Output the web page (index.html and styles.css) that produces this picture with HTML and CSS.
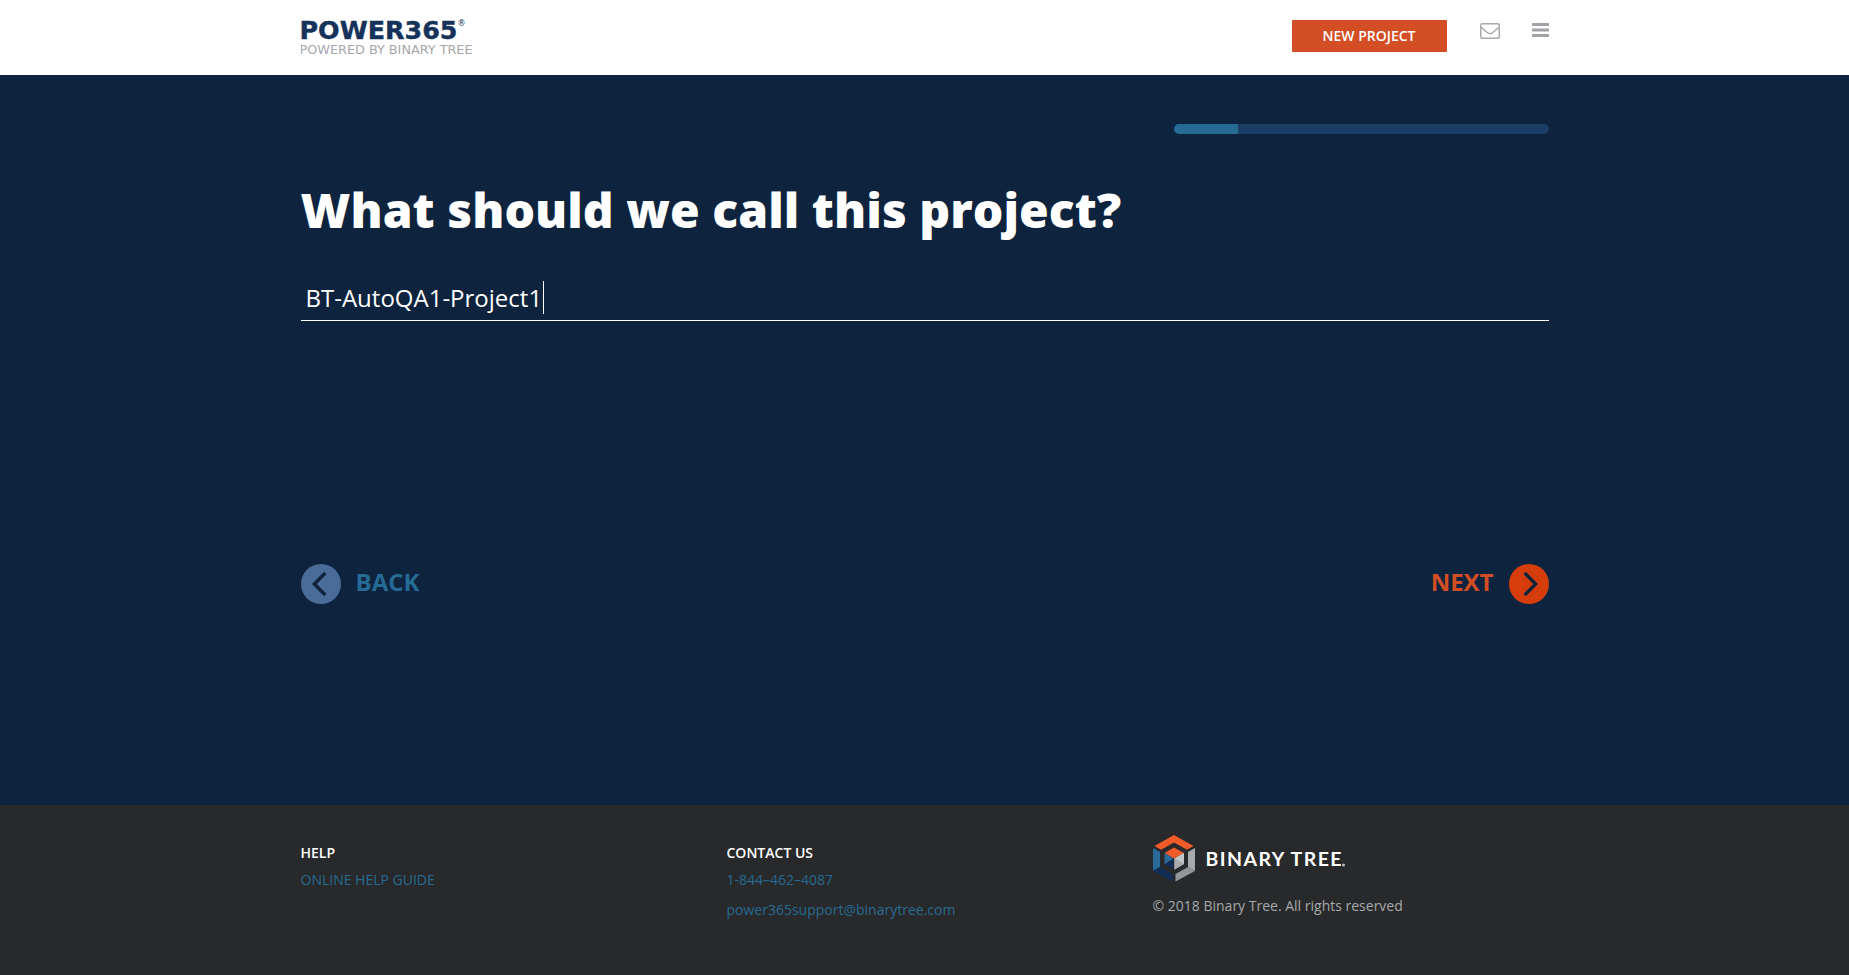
FILE: index.html
```
<!DOCTYPE html>
<html lang="en">
<head>
<meta charset="utf-8">
<title>Power365 - New Project</title>
<link rel="stylesheet" href="styles.css">
</head>
<body>
<header class="header">
  <div class="container header-row">
    <a class="brand">
      <svg width="180" height="40" viewBox="0 0 180 40">
        <text class="brand-name" x="-1.5" y="22.8" textLength="158" lengthAdjust="spacingAndGlyphs">POWER365</text>
        <text class="brand-reg" x="156.5" y="10">®</text>
        <text class="brand-sub" x="-1.5" y="38" textLength="173" lengthAdjust="spacingAndGlyphs">POWERED BY BINARY TREE</text>
      </svg>
    </a>
    <div class="actions">
      <a class="new-project">NEW PROJECT</a>
      <svg class="mail" width="20" height="16" viewBox="0 0 20 16"><rect x=".75" y=".75" width="18.5" height="14.5" rx="1.5"/><path d="M1 4.2C3 6 5 7.5 7 9.2C8.5 10.6 9.2 10.8 10 10.8S11.5 10.6 13 9.2C15 7.5 17 6 19 4.2"/></svg>
      <svg class="menu" width="17" height="14" viewBox="0 0 17 14"><rect width="17" height="3" rx=".5"/><rect y="5.6" width="17" height="3" rx=".5"/><rect y="11" width="17" height="3" rx=".5"/></svg>
    </div>
  </div>
</header>
<main class="main">
  <div class="container">
    <div class="progress"><div class="progress-fill"></div></div>
    <h1 class="title">What should we call this project?</h1>
    <div class="field"><span>BT-AutoQA1-Project1</span><i class="caret"></i></div>
    <nav class="steps">
      <a class="step back">
        <svg width="40" height="40" viewBox="0 0 40 40"><circle cx="20" cy="20" r="20"/><path d="M24.3 9L13.3 20L24.3 31"/></svg>
        <span>BACK</span>
      </a>
      <a class="step next">
        <span>NEXT</span>
        <svg width="40" height="40" viewBox="0 0 40 40"><circle cx="20" cy="20" r="20"/><path d="M15.7 9L26.7 20L15.7 31"/></svg>
      </a>
    </nav>
  </div>
</main>
<footer class="footer">
  <div class="container columns">
    <section>
      <h2 class="heading">HELP</h2>
      <a class="link">ONLINE HELP GUIDE</a>
    </section>
    <section>
      <h2 class="heading">CONTACT US</h2>
      <a class="link">1-844–462–4087</a>
      <a class="link">power365support@binarytree.com</a>
    </section>
    <section>
      <svg class="company" width="200" height="48" viewBox="0 0 200 48">
        <path fill="#f15a29" d="M21 0L40.5 11L34 14.8L21 7.5L8 14.8L1.5 11ZM21 12.5L31 18L21 23.5L11.5 18Z"/>
        <path fill="#2a6a98" d="M0 13L7 17V32L0 36ZM11.5 18L20.5 23.5L11.5 29.5Z"/>
        <path fill="#112d55" d="M0 36L7 32L19.5 39V46.5ZM20.5 23.5V34.5L11.5 29.5Z"/>
        <path fill="#a7a9ac" d="M42 13V36L35 32V17ZM31 18V29L21.5 23.5Z"/>
        <path fill="#939598" d="M42 36L22.5 46.5V39L35 32Z"/>
        <path fill="#c3c5c8" d="M21.5 23.5L31 18V29L21.5 34.5Z"/>
        <path fill="#a7a9ac" d="M21.5 23.5L31 29L21.5 34.5Z"/>
        <text class="company-name" x="52.5" y="31.3" textLength="136" lengthAdjust="spacing">BINARY TREE</text>
        <circle cx="190.5" cy="30" r="1.5" fill="#bbb"/>
      </svg>
      <p class="copyright">© 2018 Binary Tree. All rights reserved</p>
    </section>
  </div>
</footer>
</body>
</html>
```
FILE: styles.css
```
* { box-sizing: border-box; }
body {
  margin: 0;
  height: 975px;
  display: flex;
  flex-direction: column;
  overflow: hidden;
  font: 14px/20px "Open Sans", sans-serif;
  background: #28292a;
}
.container { width: 1248px; margin: 0 auto; }
svg { display: block; flex: none; }

.header { height: 75px; background: #fff; }
.header-row { display: flex; justify-content: space-between; }
.brand { padding-top: 16px; }
.brand-name { font: bold 25px "DejaVu Sans", sans-serif; fill: #15325a; stroke: #15325a; stroke-width: .4; }
.brand-reg { font: 8px "DejaVu Sans", sans-serif; fill: #15325a; }
.brand-sub { font: 13px "DejaVu Sans", sans-serif; fill: #a5a7aa; }
.actions { display: flex; align-items: flex-start; padding-top: 20px; }
.new-project {
  width: 155px;
  height: 32px;
  border-radius: 1px;
  background: #d34e24;
  color: #fff;
  font-weight: 600;
  line-height: 32px;
  text-align: center;
}
.mail { margin: 3px 32px 0 33px; fill: none; stroke: #a7a9ac; stroke-width: 1.5; }
.menu { margin-top: 3px; fill: #a0a2a5; }

.main { height: 730px; background: #0e233e; }
.main .container { padding-top: 49px; }
.progress {
  width: 375px;
  height: 10px;
  margin-left: auto;
  border-radius: 5px;
  background: #1c3e66;
  overflow: hidden;
}
.progress-fill { width: 64px; height: 10px; background: #266b94; }
.title {
  margin: 43px 0 0;
  color: #fff;
  font-size: 48px;
  font-weight: 800;
  letter-spacing: .06px;
  line-height: 66px;
}
.field {
  display: flex;
  height: 44px;
  margin-top: 34px;
  padding-left: 5px;
  border-bottom: 1px solid #fff;
  color: #fff;
  font-size: 24px;
  line-height: 41px;
}
.caret { width: 1px; height: 33px; margin: 4px 0 0 1px; background: #fff; }
.steps { display: flex; justify-content: space-between; margin-top: 243px; }
.step {
  display: flex;
  gap: 15px;
  font-size: 24px;
  font-weight: 700;
  line-height: 36px;
}
.step path { fill: none; stroke: #0e233e; stroke-width: 3.3; }
.back { color: #266b94; }
.back circle { fill: #4b6c98; }
.next { color: #d34e24; }
.next circle { fill: #d53e0c; }

.footer { height: 170px; background: #28292a; }
.columns { display: grid; grid-template-columns: 426px 426px 396px; }
.heading {
  margin: 38px 0 0;
  color: #fff;
  font-size: 14px;
  font-weight: 600;
  line-height: 20px;
}
.link { display: block; margin-bottom: 10px; color: #266b94; }
.heading + .link { margin-top: 7px; }
.company { margin-top: 30px; }
.company-name { font: bold 19.5px Lato, sans-serif; fill: #fff; }
.copyright { margin: 13px 0 0; color: #a7a9ac; }
```
